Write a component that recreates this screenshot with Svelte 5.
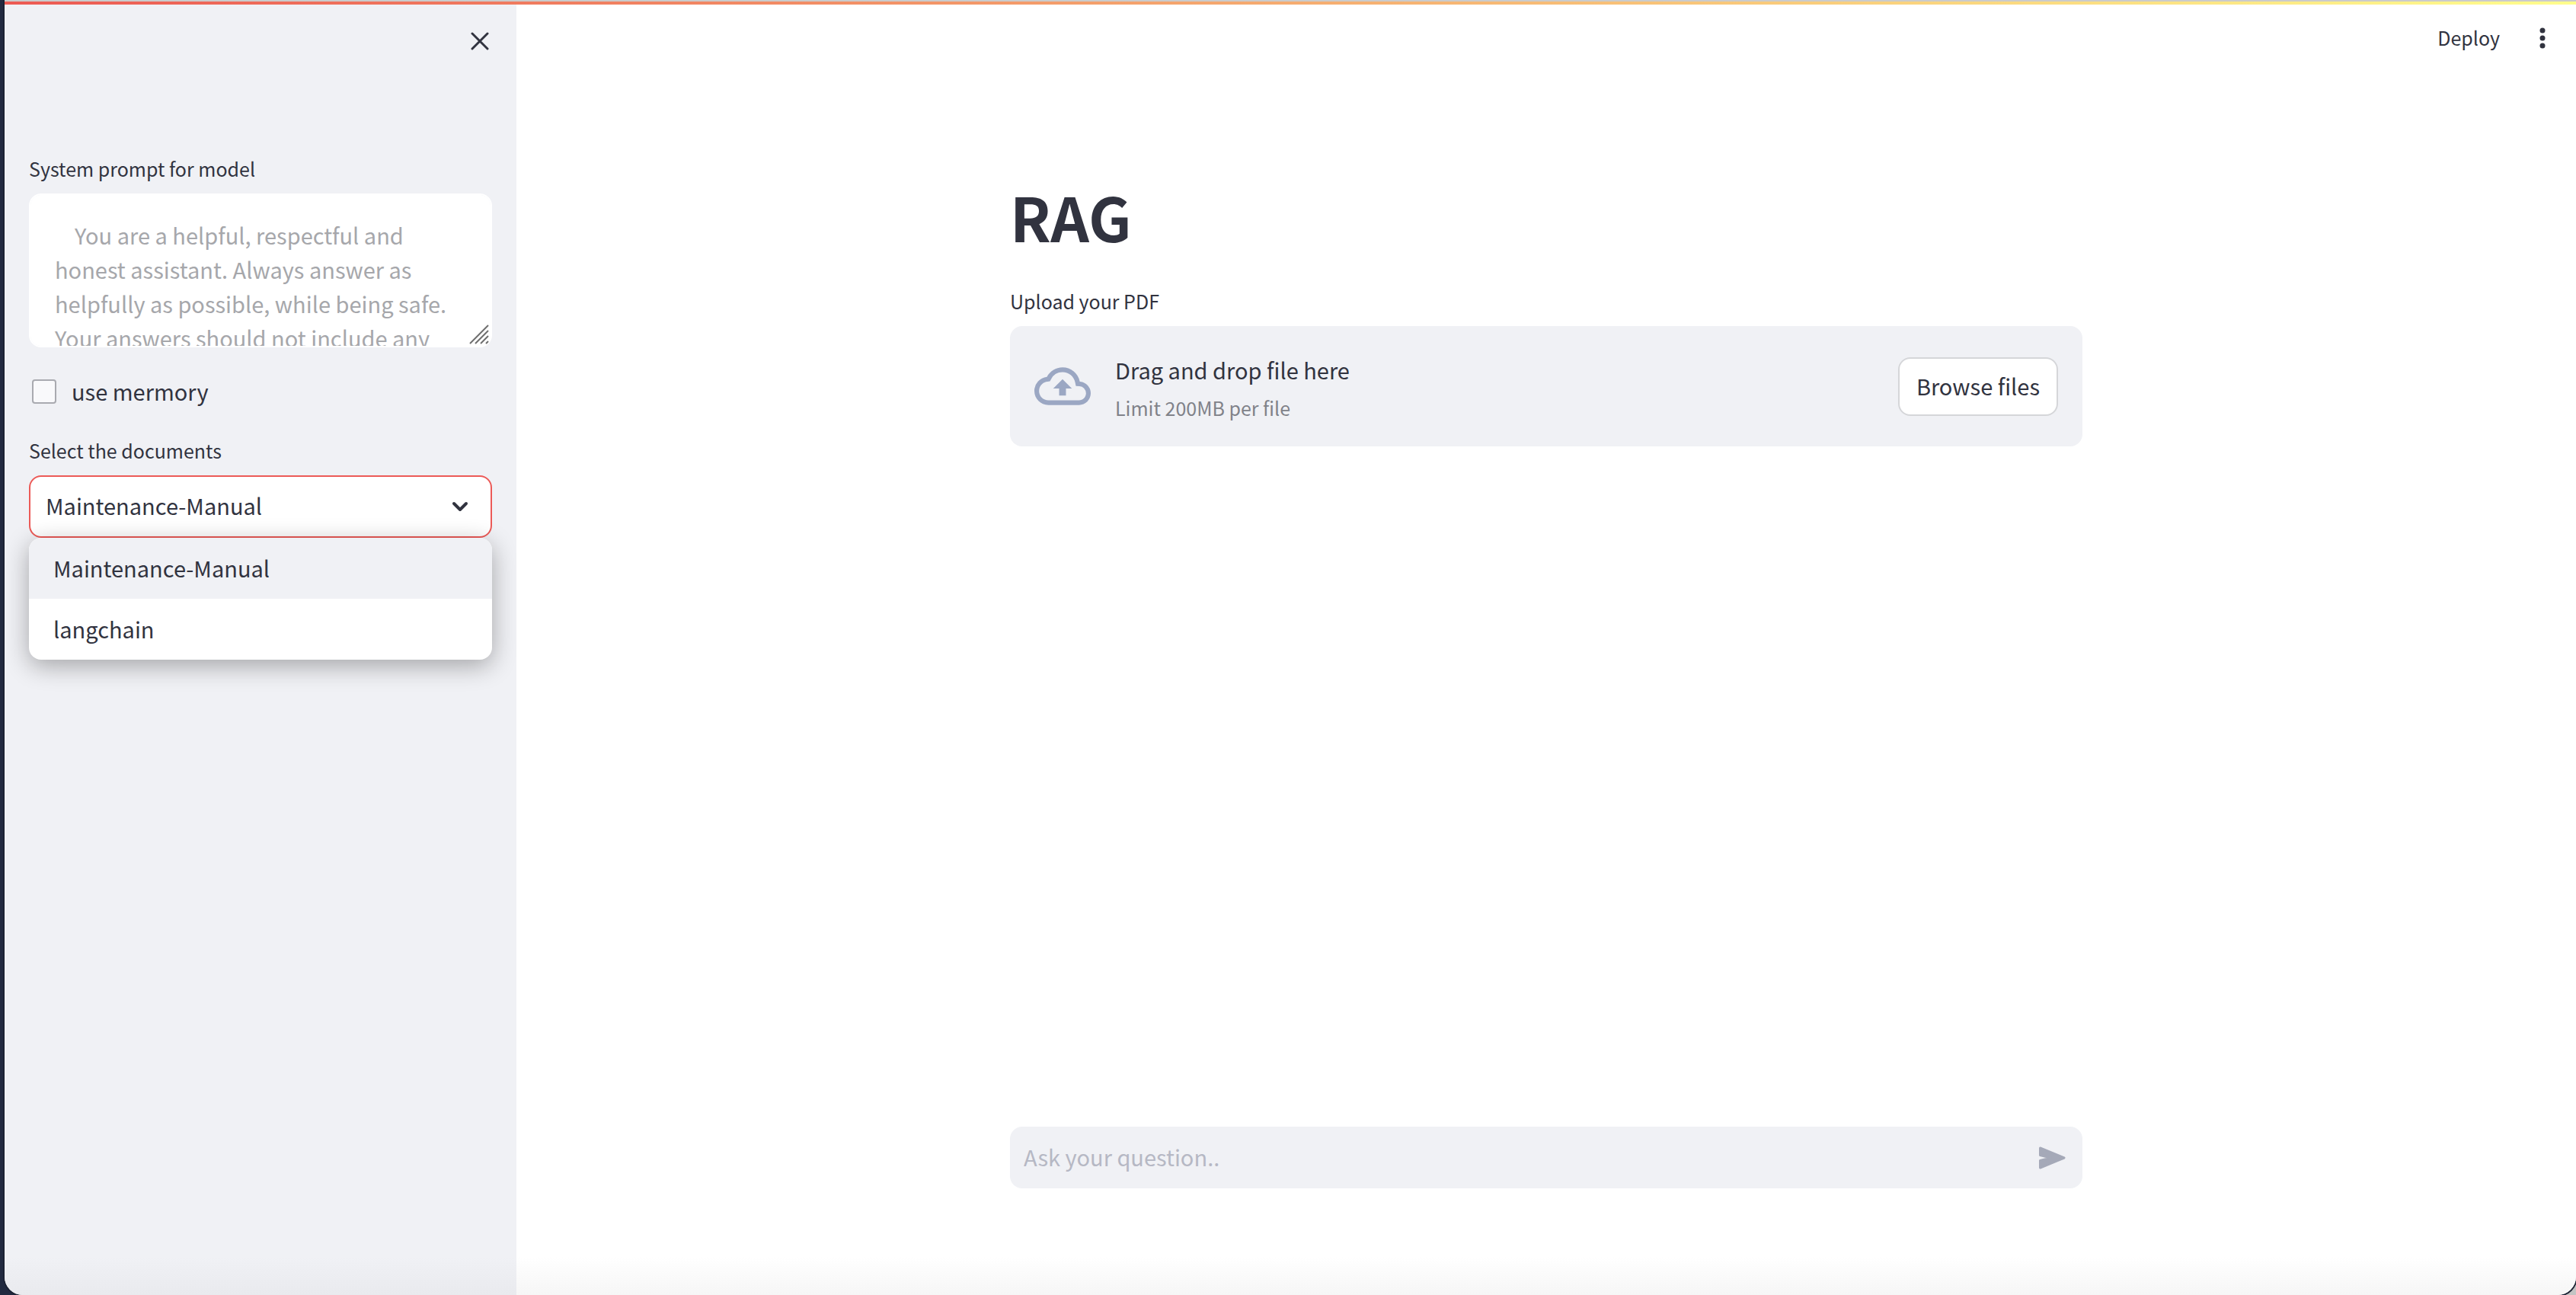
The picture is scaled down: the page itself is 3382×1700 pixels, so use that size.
<script>
  let prompt = $state(
    '    You are a helpful, respectful and honest assistant. Always answer as helpfully as possible, while being safe. Your answers should not include any harmful content.'
  );
  let documents = ['Maintenance-Manual', 'langchain'];
  let selected = $state('Maintenance-Manual');
  let useMemory = $state(false);
  let question = $state('');
</script>

<div class="desktop">
  <div class="window">
    <div class="decoration"></div>
    <div class="app">
      <aside class="sidebar">
        <div class="sidebar-head">
          <button class="icon-button" aria-label="Close sidebar">
            <svg width="24" height="24" viewBox="0 0 24 24">
              <path d="M2 2 22 22M22 2 2 22" fill="none" stroke="currentColor" stroke-width="3" stroke-linecap="round" />
            </svg>
          </button>
        </div>

        <div class="field">
          <label class="label" for="prompt">System prompt for model</label>
          <div class="textarea-wrap">
            <textarea id="prompt" bind:value={prompt} spellcheck="false"></textarea>
            <svg class="grip" width="26" height="26" viewBox="0 0 26 26">
              <path d="M1 25 25 1M8 25 25 8M15 25 25 15M22 25 25 22" fill="none" stroke="#6f6f6f" stroke-width="2" />
            </svg>
          </div>
        </div>

        <label class="check">
          <input type="checkbox" bind:checked={useMemory} />
          <span>use mermory</span>
        </label>

        <div class="field">
          <label class="label" for="docs">Select the documents</label>
          <div class="select-wrap">
            <select id="docs" bind:value={selected}>
              {#each documents as name}
                <option value={name}>{name}</option>
              {/each}
            </select>
            <svg class="chevron" width="24" height="16" viewBox="0 0 24 16">
              <path d="M4 4 12 12 20 4" fill="none" stroke="currentColor" stroke-width="4" stroke-linecap="round" stroke-linejoin="round" />
            </svg>
            <ul class="menu" role="listbox" aria-label="Documents">
              {#each documents as name}
                <li role="option" aria-selected={name === selected} class:active={name === selected}>{name}</li>
              {/each}
            </ul>
          </div>
        </div>
      </aside>

      <main class="main">
        <header class="toolbar">
          <button class="deploy">Deploy</button>
          <button class="icon-button" aria-label="Main menu">
            <svg width="8" height="28" viewBox="0 0 8 28">
              <g fill="currentColor">
                <circle cx="4" cy="4" r="3.5" />
                <circle cx="4" cy="14" r="3.5" />
                <circle cx="4" cy="24" r="3.5" />
              </g>
            </svg>
          </button>
        </header>

        <section class="column">
          <h1>RAG</h1>
          <div class="label" id="upload-label">Upload your PDF</div>
          <div class="dropzone" role="group" aria-labelledby="upload-label">
            <svg class="cloud" width="74" height="74" viewBox="0 0 24 24">
              <path
                fill="currentColor"
                d="M19.35 10.04A7.49 7.49 0 0012 4C9.11 4 6.6 5.64 5.35 8.04A5.994 5.994 0 000 14c0 3.31 2.69 6 6 6h13c2.76 0 5-2.24 5-5 0-2.64-2.05-4.78-4.65-4.96zM19 18H6c-2.21 0-4-1.79-4-4 0-2.05 1.53-3.76 3.56-3.97l1.07-.11.5-.95A5.469 5.469 0 0112 6c2.62 0 4.88 1.86 5.39 4.43l.3 1.5 1.53.11A2.98 2.98 0 0122 15c0 1.65-1.35 3-3 3zM8 13h2.55v3h2.9v-3H16l-4-4z"
              />
            </svg>
            <div class="drop-text">
              <span class="drop-title">Drag and drop file here</span>
              <span class="drop-limit">Limit 200MB per file</span>
            </div>
            <button class="browse">Browse files</button>
          </div>
        </section>

        <form class="chat" onsubmit={(e) => e.preventDefault()}>
          <input type="text" placeholder="Ask your question.." aria-label="Ask your question" bind:value={question} />
          <button class="icon-button send" aria-label="Send">
            <svg width="36" height="32" viewBox="0 0 36 32">
              <path
                d="M2.500 3 34 16 2.500 29V19.500L16.500 16 2.500 12.500z"
                fill="currentColor"
                stroke="currentColor"
                stroke-width="3"
                stroke-linejoin="round"
              />
            </svg>
          </button>
        </form>
      </main>
    </div>
  </div>
</div>

<style>
  :global(body) {
    margin: 0;
  }

  .desktop,
  .desktop * {
    box-sizing: border-box;
  }

  .desktop {
    display: flex;
    min-height: 100vh;
    padding-left: 6px;
    background: linear-gradient(90deg, #222a40 0 50%, #c4c4c4 50%);
    color: #31333f;
    font-family: 'Noto Sans CJK JP', 'Noto Sans', sans-serif;
    font-size: 29px;
    line-height: 45px;
  }

  .window {
    flex: 1;
    display: flex;
    flex-direction: column;
    overflow: hidden;
    background: #fff;
    border-top: 2px solid #cbcbcb;
    border-radius: 0 0 24px 24px;
    box-shadow: 0 0 0 2px #1c2233;
  }

  .decoration {
    height: 4px;
    background: linear-gradient(90deg, #ec5a53, #fffd8c);
  }

  .app {
    flex: 1;
    display: flex;
  }

  button,
  input,
  select,
  textarea {
    margin: 0;
    font: inherit;
    color: inherit;
  }

  .icon-button {
    display: flex;
    padding: 0;
    border: 0;
    background: none;
  }

  .label {
    display: block;
    margin-bottom: 14px;
    font-size: 25px;
    line-height: 38px;
  }

  .sidebar {
    flex: 0 0 672px;
    display: flex;
    flex-direction: column;
    gap: 36px;
    padding: 36px 32px;
    background: linear-gradient(#f0f1f5 calc(100% - 50px), #e9eaee);
  }

  .sidebar-head {
    display: flex;
    justify-content: flex-end;
    height: 124px;
    padding-right: 4px;
  }

  .textarea-wrap,
  .select-wrap {
    position: relative;
    display: flex;
  }

  textarea {
    flex: 1;
    height: 202px;
    padding: 30px 32px;
    border: 2px solid #fff;
    border-radius: 16px;
    outline: 0;
    resize: none;
    scrollbar-width: none;
    background: #fff;
    color: #a6a7ab;
  }

  .grip {
    position: absolute;
    right: 4px;
    bottom: 4px;
  }

  .check {
    display: flex;
    align-items: center;
    gap: 20px;
    height: 44px;
    padding-left: 4px;
  }

  .check span {
    padding-bottom: 2px;
  }

  .check input {
    appearance: none;
    width: 32px;
    height: 32px;
    border: 2px solid #a9aab0;
    border-radius: 4px;
    background: #f9f9fb;
  }

  select {
    flex: 1;
    appearance: none;
    height: 82px;
    padding: 0 60px 4px 20px;
    border: 2px solid #ec5a57;
    border-radius: 16px;
    outline: 0;
    background: #fff;
  }

  .chevron {
    position: absolute;
    top: 33px;
    right: 30px;
  }

  .menu {
    position: absolute;
    top: 100%;
    left: 0;
    right: 0;
    margin: 0;
    padding: 0;
    overflow: hidden;
    list-style: none;
    border-radius: 16px;
    background: #fff;
    box-shadow: 0 8px 32px rgba(0, 0, 0, 0.32);
  }

  .menu li {
    padding: 0 32px 2px;
    line-height: 78px;
  }

  .menu .active {
    background: #f0f1f5;
  }

  .main {
    flex: 1;
    display: flex;
    flex-direction: column;
    min-width: 0;
    padding-bottom: 140px;
    background: linear-gradient(#fff calc(100% - 50px), #f6f6f6);
  }

  .toolbar {
    display: flex;
    justify-content: flex-end;
    align-items: center;
    gap: 52px;
    height: 88px;
    padding-right: 40px;
  }

  .deploy {
    padding: 0 0 2px;
    border: 0;
    background: none;
    font-size: 25px;
    line-height: 38px;
  }

  .column,
  .chat {
    width: calc(100% - 64px);
    max-width: 1408px;
    margin: 0 auto;
  }

  .column {
    flex: 1;
    padding-top: 142px;
  }

  h1 {
    margin: 0 0 44px;
    font-size: 79px;
    font-weight: 700;
    line-height: 96px;
  }

  .dropzone {
    display: flex;
    align-items: center;
    gap: 32px;
    min-height: 158px;
    padding: 0 32px;
    border-radius: 16px;
    background: #f0f1f5;
  }

  .cloud {
    flex: none;
    color: #9ba7c3;
  }

  .drop-text {
    flex: 1;
    display: flex;
    flex-direction: column;
    gap: 8px;
    padding-top: 2px;
  }

  .drop-limit {
    color: #808289;
    font-size: 25px;
    line-height: 38px;
  }

  .browse {
    height: 77px;
    padding: 0 22px 2px;
    border: 2px solid #d5d6d9;
    border-radius: 16px;
    background: #fff;
  }

  .chat {
    display: flex;
    align-items: center;
    height: 81px;
    padding: 0 22px 0 18px;
    border-radius: 16px;
    background: #f0f1f5;
  }

  .chat input {
    flex: 1;
    min-width: 0;
    padding: 0 0 2px;
    border: 0;
    outline: 0;
    background: none;
  }

  .chat input::placeholder {
    color: #b6b8c4;
    opacity: 1;
  }

  .send {
    color: #a5a9b8;
  }
</style>
